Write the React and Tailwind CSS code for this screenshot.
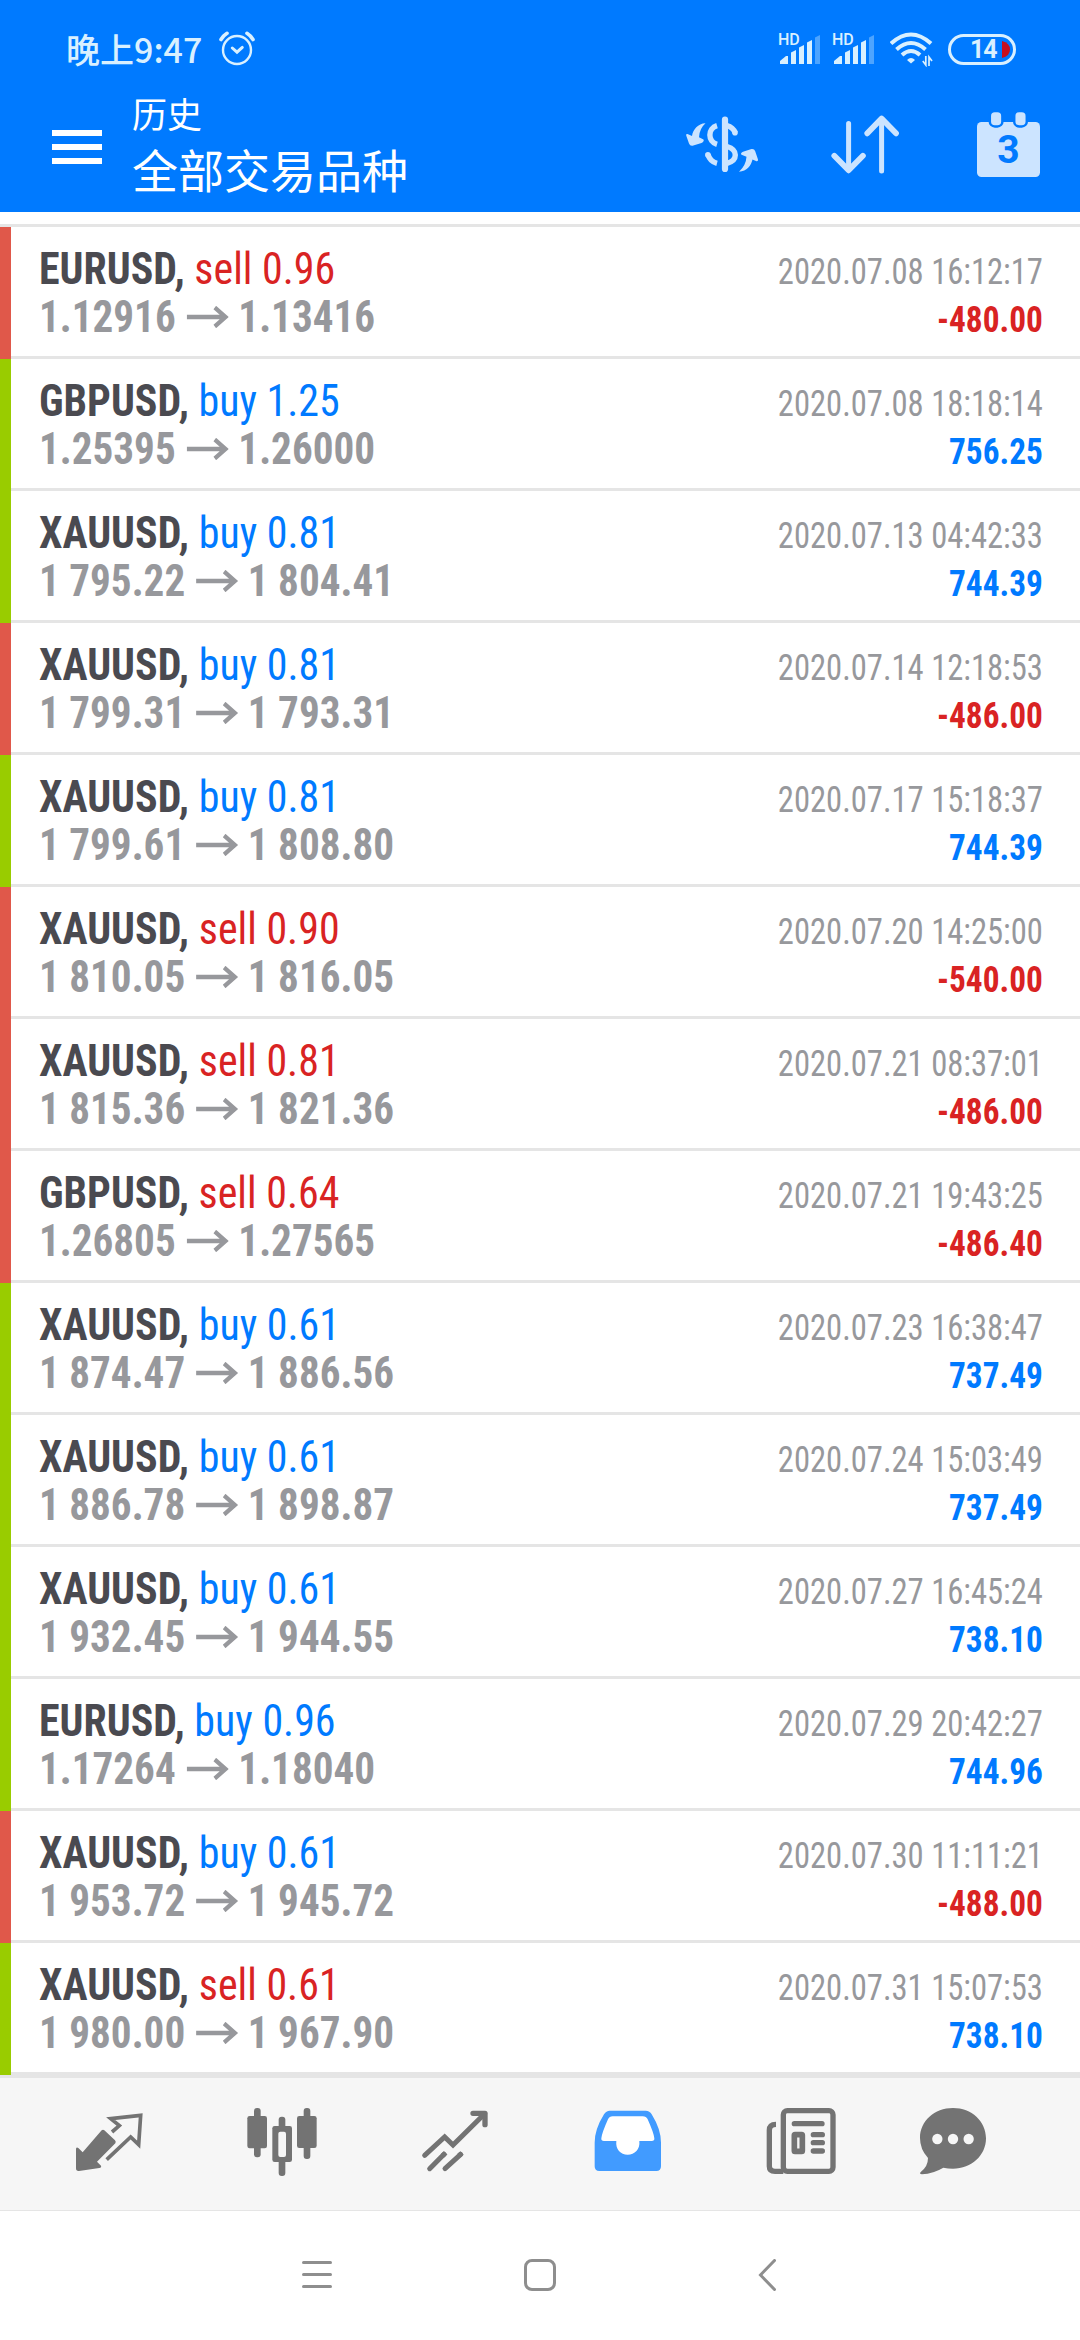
import React from 'react';

const deals = [
  { symbol: 'EURUSD', side: 'sell', volume: '0.96', open: '1.12916', close: '1.13416', time: '2020.07.08 16:12:17', profit: '-480.00' },
  { symbol: 'GBPUSD', side: 'buy', volume: '1.25', open: '1.25395', close: '1.26000', time: '2020.07.08 18:18:14', profit: '756.25' },
  { symbol: 'XAUUSD', side: 'buy', volume: '0.81', open: '1 795.22', close: '1 804.41', time: '2020.07.13 04:42:33', profit: '744.39' },
  { symbol: 'XAUUSD', side: 'buy', volume: '0.81', open: '1 799.31', close: '1 793.31', time: '2020.07.14 12:18:53', profit: '-486.00' },
  { symbol: 'XAUUSD', side: 'buy', volume: '0.81', open: '1 799.61', close: '1 808.80', time: '2020.07.17 15:18:37', profit: '744.39' },
  { symbol: 'XAUUSD', side: 'sell', volume: '0.90', open: '1 810.05', close: '1 816.05', time: '2020.07.20 14:25:00', profit: '-540.00' },
  { symbol: 'XAUUSD', side: 'sell', volume: '0.81', open: '1 815.36', close: '1 821.36', time: '2020.07.21 08:37:01', profit: '-486.00' },
  { symbol: 'GBPUSD', side: 'sell', volume: '0.64', open: '1.26805', close: '1.27565', time: '2020.07.21 19:43:25', profit: '-486.40' },
  { symbol: 'XAUUSD', side: 'buy', volume: '0.61', open: '1 874.47', close: '1 886.56', time: '2020.07.23 16:38:47', profit: '737.49' },
  { symbol: 'XAUUSD', side: 'buy', volume: '0.61', open: '1 886.78', close: '1 898.87', time: '2020.07.24 15:03:49', profit: '737.49' },
  { symbol: 'XAUUSD', side: 'buy', volume: '0.61', open: '1 932.45', close: '1 944.55', time: '2020.07.27 16:45:24', profit: '738.10' },
  { symbol: 'EURUSD', side: 'buy', volume: '0.96', open: '1.17264', close: '1.18040', time: '2020.07.29 20:42:27', profit: '744.96' },
  { symbol: 'XAUUSD', side: 'buy', volume: '0.61', open: '1 953.72', close: '1 945.72', time: '2020.07.30 11:11:21', profit: '-488.00' },
  { symbol: 'XAUUSD', side: 'sell', volume: '0.61', open: '1 980.00', close: '1 967.90', time: '2020.07.31 15:07:53', profit: '738.10' },
];

function AlarmIcon() {
  return (
    <svg className="w-9 h-9 ml-[17px]" viewBox="219 33 36 36" fill="none" stroke="#d9f0ff" strokeLinecap="round">
      <circle cx="237" cy="52" r="14" strokeWidth="2.4" />
      <path d="M232.3 50l4.7 4.2 5.3-4.8" strokeWidth="3" />
      <path d="M221 41.5q2.5-4 6-6.2M253 41.5q-2.5-4-6-6.2" strokeWidth="3.6" />
    </svg>
  );
}

function SignalIcon() {
  return (
    <div className="relative w-[42px] h-8">
      <span className="absolute left-[-1px] top-[-1px] text-[16px] leading-[15px] font-medium text-[#d9f0ff] font-['Roboto',sans-serif] [font-stretch:normal]">HD</span>
      <svg className="w-[42px] h-8" viewBox="0 0 42 32" fill="#d9f0ff">
        <path d="M1 31v-3l6-5h2v8z" />
        <path d="M12 31V19.5l5-2.5v14z" />
        <path d="M20 31V14.5l5-2.5v19z" />
        <path d="M28 31V9.5l5-2.5v24z" />
        <path d="M36 31V4.5l5-2.5v29z" fill="#4da4ff" />
      </svg>
    </div>
  );
}

function WifiIcon() {
  return (
    <svg className="w-[43px] h-9" viewBox="890 32 43 36" fill="none" stroke="#d9f0ff" strokeWidth="4">
      <path d="M891 44.5Q911 26.5 931 44.5" />
      <path d="M896.5 50.5Q911 37.5 925.5 50.5" />
      <path d="M902 56Q911 48 920 56" />
      <path d="M907 61l4 3.5 4-3.5q-4-4-8 0z" fill="#d9f0ff" stroke="none" />
      <path d="M925.8 57v9l-3-4M929 67v-9l3 4" strokeWidth="1.7" />
    </svg>
  );
}

function BatteryIcon() {
  return (
    <div className="relative w-[68px] h-[31px] rounded-full border-[3px] border-[#d9f0ff]">
      <span className="absolute left-[19px] top-0 text-[25px] leading-[25px] font-bold tracking-[-1px] text-[#d9f0ff] font-['Roboto',sans-serif] [font-stretch:normal]">14</span>
      <svg className="absolute right-[3px] top-[4px] w-2 h-[17px]" viewBox="0 0 8 17">
        <path d="M0 0Q8 2 8 8.5T0 17z" fill="#c80f1e" />
      </svg>
    </div>
  );
}

function CurrencyIcon() {
  return (
    <svg className="w-[76px] h-16" viewBox="684 112 76 64" fill="none" stroke="#cce4ff" strokeWidth="5.4">
      <path d="M725 119.5v49.5" strokeWidth="6.2" strokeLinecap="round" />
      <path d="M717 125.7C707.5 128.5 707.5 141.5 717 144.3" />
      <path d="M708 154.5q2 7 9 8.8" />
      <path d="M707.9 154.8v.1" strokeWidth="5.6" strokeLinecap="round" />
      <path d="M727 125.6q6 1.5 8.2 7.2" />
      <path d="M735 132.6v.1" strokeWidth="5.6" strokeLinecap="round" />
      <path d="M727 146.5q8.3 2.5 8.3 8.5t-8.3 8.3" />
      <path
        d="M705.5 123.3C698 123.5 693 129.5 692 136L687.5 134Q685.7 133.5 686.2 135.5L689 143.5Q690 146.2 692.5 145.8L701.5 143Q704.5 141.5 703.5 139.6L699 137.3Q699.5 128.5 705.5 123.3z"
        fill="#cce4ff"
        stroke="none"
      />
      <path
        d="M739 171.7C747 171.5 751 165.5 752.5 159.5L756.5 161.2Q758.3 161.5 758 159.5L755.2 151.2Q754.3 148.6 751.5 149L743 151.7Q740 153 741.5 154.8L746.5 156.8Q746 165.5 739 171.7z"
        fill="#cce4ff"
        stroke="none"
      />
    </svg>
  );
}

function SortIcon() {
  return (
    <svg className="w-[70px] h-16" viewBox="830 113 70 64" fill="none" stroke="#cce4ff" strokeLinecap="round" strokeLinejoin="round">
      <path d="M848.6 124.5v46M881.6 120v52" strokeWidth="5" />
      <path d="M834.3 156.8l14.3 14.5 14.3-14.5M867.3 134.3l14.3-14.8 14.4 14.8" strokeWidth="5.8" />
    </svg>
  );
}

function CalendarIcon() {
  return (
    <div className="relative w-[63px] h-[66px]">
      <svg className="w-[63px] h-[66px]" viewBox="977 111 63 66" fill="#cce4ff">
        <rect x="977" y="122" width="63" height="55" rx="4.5" />
        <rect x="989.8" y="111" width="12.6" height="15.4" rx="5" stroke="#007aff" strokeWidth="2.5" />
        <rect x="1014.2" y="111" width="12.6" height="15.4" rx="5" stroke="#007aff" strokeWidth="2.5" />
      </svg>
      <span className="absolute inset-x-0 top-[20px] text-center text-[39px] leading-[39px] font-bold text-[#007aff] font-['Roboto',sans-serif] [font-stretch:normal]">3</span>
    </div>
  );
}

function Header() {
  return (
    <header className="h-[212px] bg-[#007aff] text-white font-['Noto_Sans_CJK_SC',sans-serif]">
      <div className="h-[98px] flex items-center pl-[66px] pr-16">
        <span className="text-[34px] leading-[36px] font-medium text-[#d9f0ff]">晚上9:47</span>
        <AlarmIcon />
        <div className="ml-auto flex items-center">
          <SignalIcon />
          <div className="w-3" />
          <SignalIcon />
          <div className="w-[15px]" />
          <WifiIcon />
          <div className="w-[15px]" />
          <BatteryIcon />
        </div>
      </div>
      <div className="h-[97px] flex items-center pl-[52px] pr-10">
        <div className="w-[50px] flex flex-col gap-2">
          <div className="h-[6px] bg-white" />
          <div className="h-[6px] bg-white" />
          <div className="h-[6px] bg-white" />
        </div>
        <div className="ml-[30px] pb-1">
          <div className="text-[35px] leading-[42px] mb-1">历史</div>
          <div className="text-[46px] leading-[60px]">全部交易品种</div>
        </div>
        <div className="ml-auto mb-[5px] flex items-center">
          <CurrencyIcon />
          <div className="w-[70px]" />
          <SortIcon />
          <div className="w-[77px]" />
          <CalendarIcon />
        </div>
      </div>
    </header>
  );
}

function DealRow({ deal }) {
  const loss = deal.profit.startsWith('-');
  return (
    <li className="flex h-[132px]">
      <div className={loss ? 'w-[11px] bg-[#e0584a]' : 'w-[11px] bg-[#99cc00]'} />
      <div className="flex-1 flex justify-between border-b-[3px] border-[#e5e5e5] pl-[28px] pr-[37px]">
        <div className="pt-[18px] text-[44px] leading-[48px] whitespace-nowrap">
          <div className="origin-left scale-x-[0.953]">
            <span className="font-bold text-[#4a4a50]">{deal.symbol},</span>{' '}
            <span className={deal.side === 'sell' ? 'text-[#d92323]' : 'text-[#007aff]'}>
              {deal.side} {deal.volume}
            </span>
          </div>
          <div className="flex items-center font-bold text-[#97989c] origin-left scale-x-[0.935]">
            <span>{deal.open}</span>
            <svg className="w-[45px] h-[22px] ml-3 mr-[10px]" viewBox="0 0 45 22" fill="none" stroke="#97989c" strokeWidth="4.4">
              <path d="M0 11h42M30 1.5L41.5 11 30 20.500" />
            </svg>
            <span>{deal.close}</span>
          </div>
        </div>
        <div className="pt-[21px] text-[36px] leading-[48px] text-right whitespace-nowrap">
          <div className="text-[#97989c] origin-right scale-x-[0.905]">{deal.time}</div>
          <div className={loss ? 'font-bold text-[#d92323] origin-right scale-x-[0.925]' : 'font-bold text-[#007aff] origin-right scale-x-[0.925]'}>
            {deal.profit}
          </div>
        </div>
      </div>
    </li>
  );
}

function TabBar() {
  const tab = 'w-[173px] flex items-center justify-center';
  const icon = 'w-[72px] h-[72px]';
  return (
    <nav className="h-[136px] flex bg-[#f6f6f6] border-t-[3px] border-b border-[#e5e5e5] pl-[22px]">
      {/* Quotes */}
      <div className={tab}>
        <svg className={icon} viewBox="217 144 216 216" fill="#737373">
          <path d="M303 211q4-3 8 0l32 30q4 4 1 9l-55 55 12 12q2 6-5 7l-61 9q-9 1-9-8v-58q1-7 7-3l13 13z" />
          <path d="M334 216l22-19-26-21 90-10-6 88-24-23-72 68" fill="none" stroke="#737373" strokeWidth="11" />
        </svg>
      </div>
      {/* Charts */}
      <div className={tab}>
        <svg className={icon} viewBox="735 144 216 216" fill="#737373">
          <rect x="759" y="144" width="20" height="148" rx="9" />
          <rect x="739" y="168" width="59" height="97" rx="7" />
          <rect x="908" y="144" width="20" height="153" rx="9" />
          <rect x="888" y="168" width="59" height="96" rx="7" />
          <rect x="833" y="170" width="20" height="178" rx="9" />
          <rect x="814" y="198" width="59" height="108" rx="7" />
          <rect x="832" y="215" width="23" height="76" rx="6" fill="#f6f6f6" />
        </svg>
      </div>
      {/* Trade */}
      <div className={tab}>
        <svg className={icon} viewBox="175 144 216 216" fill="none" stroke="#737373" strokeWidth="15" strokeLinecap="round">
          <path d="M192 286l60-55 25 24 95-94" />
          <path d="M337 160h36v34" strokeWidth="16" strokeLinejoin="round" />
          <path d="M207 326l43-43M253 326l47-43" />
          <path d="M246 287l9-9M295 287l9-8" strokeLinecap="butt" />
        </svg>
      </div>
      {/* History, the active tab */}
      <div className={tab}>
        <svg className={icon} viewBox="695 144 216 216">
          <path
            d="M748 152h108q12 0 18 11 28 45 28 85v71q0 14-14 14H717q-14 0-14-14v-71q0-40 28-85 7-11 17-11z"
            fill="#419bff"
          />
          <path
            d="M757 169h90q11 0 15 9 18 40 20 57 1 8-8 8h-37c3 25-14 41-35 41s-37-16-34-41h-37q-9 0-8-8 2-17 20-57 4-9 14-9z"
            fill="#fff"
          />
        </svg>
      </div>
      {/* News */}
      <div className={tab}>
        <svg className={icon} viewBox="135 144 216 216" fill="none" stroke="#737373" strokeWidth="16">
          <rect x="190" y="152" width="149" height="182" rx="12" />
          <path d="M168 193q-20 0-20 18v108q0 15 17 15h25" />
          <path d="M223 191h83M280 224h27M280 248h27M280 273h27" strokeLinecap="round" />
          <rect x="223" y="224" width="24" height="50" rx="2" strokeWidth="17" />
        </svg>
      </div>
      {/* Messages */}
      <div className="w-[132px] flex items-center justify-center">
        <svg className={icon} viewBox="591 144 216 216" fill="#737373">
          <path d="M699 144c56 0 99 40 99 91s-43 91-99 91q-15 0-29-3-30 18-64 20-10-2-3-8 21-16 21-41-24-26-24-60c0-51 43-90 99-90z" />
          <circle cx="652" cy="237" r="15.5" fill="#f6f6f6" />
          <circle cx="699" cy="237" r="15.5" fill="#f6f6f6" />
          <circle cx="746" cy="237" r="15.5" fill="#f6f6f6" />
        </svg>
      </div>
    </nav>
  );
}

function SystemNav() {
  return (
    <div className="h-[129px] flex items-center bg-white pl-[302px] pb-[2px]">
      <div className="w-[30px] flex flex-col gap-[9px]">
        <div className="h-[3px] rounded-full bg-[#8e8e8e]" />
        <div className="h-[3px] rounded-full bg-[#8e8e8e]" />
        <div className="h-[3px] rounded-full bg-[#8e8e8e]" />
      </div>
      <div className="ml-[192px] w-8 h-8 rounded-[8px] border-[3px] border-[#8e8e8e]" />
      <svg className="ml-[202px] w-[18px] h-8" viewBox="0 0 18 32" fill="none" stroke="#8e8e8e" strokeWidth="3" strokeLinecap="round">
        <path d="M16.5 1.5L2.5 16l14 14.5" />
      </svg>
    </div>
  );
}

export default function App() {
  return (
    <div className="w-[1080px] h-[2340px] overflow-hidden bg-white font-['Roboto_Condensed','Roboto',sans-serif] [font-stretch:condensed]">
      <Header />
      <ul className="mt-3 border-t-[3px] border-[#e5e5e5]">
        {deals.map((deal) => (
          <DealRow key={deal.time} deal={deal} />
        ))}
      </ul>
      <TabBar />
      <SystemNav />
    </div>
  );
}
